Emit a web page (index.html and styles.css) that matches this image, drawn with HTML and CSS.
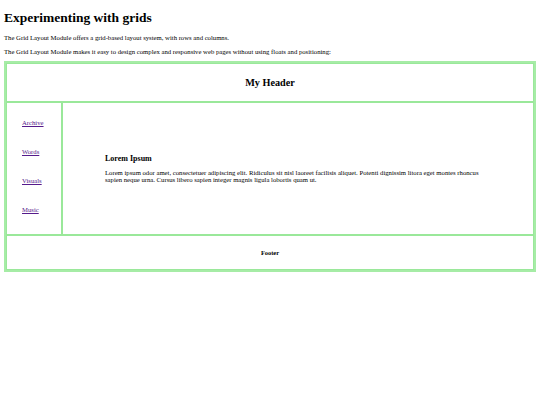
FILE: index.html
```html
<!DOCTYPE html>
<html lang="en">
<head>
<meta charset="utf-8">
<title>Experimenting with grids</title>
<link rel="stylesheet" href="styles.css">
</head>
<body>
  <h1 class="title">Experimenting with grids</h1>
  <p class="intro">The Grid Layout Module offers a grid-based layout system, with rows and columns.</p>
  <p class="intro">The Grid Layout Module makes it easy to design complex and responsive web pages without using floats and positioning:</p>

  <div class="grid">
    <header class="cell header"><h2>My Header</h2></header>
    <nav class="cell menu">
      <a href="#archive">Archive</a>
      <a href="#words">Words</a>
      <a href="#visuals">Visuals</a>
      <a href="#music">Music</a>
    </nav>
    <main class="cell main">
      <h3>Lorem Ipsum</h3>
      <p>Lorem ipsum odor amet, consectetuer adipiscing elit. Ridiculus sit nisl laoreet facilisis aliquet. Potenti dignissim litora eget montes rhoncus sapien neque urna. Cursus libero sapien integer magnis ligula lobortis quam ut.</p>
    </main>
    <footer class="cell footer"><h4>Footer</h4></footer>
  </div>
</body>
</html>
```

FILE: styles.css
```css
html, body {
  margin: 0;
  padding: 0;
  background: #fff;
}

body {
  padding: 0 4px;
  font-family: "Liberation Serif", "Times New Roman", serif;
  color: #000;
}

.title {
  font-size: 13.5px;
  line-height: 18px;
  margin: 9px 0 6px;
}

.intro {
  font-size: 6.7px;
  line-height: 9px;
  margin: 0 0 5px;
}

/* page grid: header across the top, menu + main, footer across the bottom */
.grid {
  margin-top: 4px;
  display: grid;
  grid-template-columns: 56px 1fr;
  grid-template-rows: 39px 133px 35px;
  grid-template-areas:
    "header header"
    "menu main"
    "footer footer";
  border: 2px solid #a6eca6;
}

.cell {
  border: 1px solid #9ae89a;
}

.header {
  grid-area: header;
  display: flex;
  align-items: center;
  justify-content: center;
}

.header h2 {
  margin: 0;
  font-size: 10.2px;
}

.menu {
  grid-area: menu;
  display: flex;
  flex-direction: column;
  justify-content: center;
  gap: 20px;
  padding: 0 0 5px 15px;
}

.menu a {
  font-size: 6.7px;
  line-height: 9px;
  color: #551a8b;
}

.main {
  grid-area: main;
  display: flex;
  flex-direction: column;
  justify-content: center;
  padding: 0 50px 0 42px;
}

.main h3 {
  margin: 0 0 6px;
  font-size: 8px;
}

.main p {
  margin: 0;
  font-size: 6.7px;
  line-height: 7.5px;
}

.footer {
  grid-area: footer;
  display: flex;
  align-items: center;
  justify-content: center;
}

.footer h4 {
  margin: 0;
  font-size: 6.4px;
}
```
